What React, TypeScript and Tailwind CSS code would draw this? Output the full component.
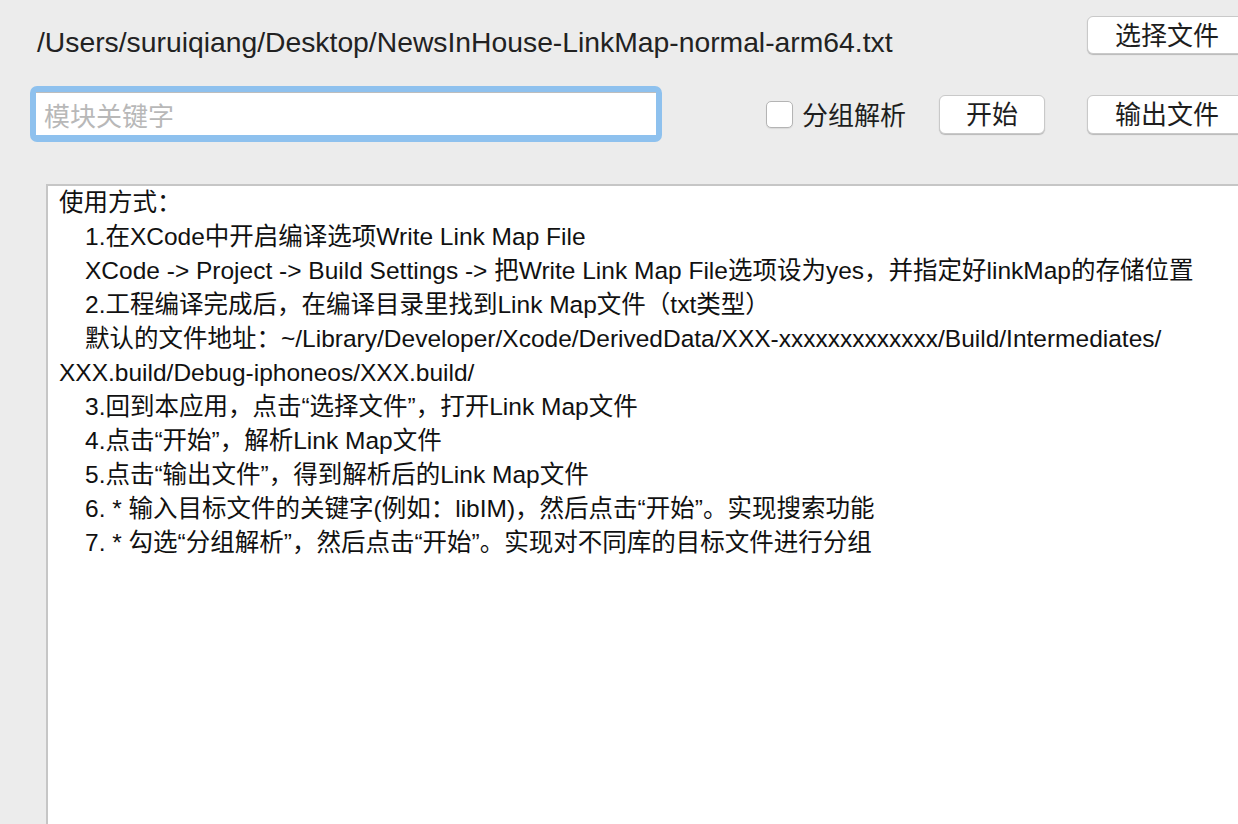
import React from "react";

const font = { fontFamily: '"Liberation Sans", "Noto Sans CJK SC", Arial, sans-serif' };

function MacButton({ label, className }: { label: string; className: string }) {
  return (
    <div
      className={
        "shrink-0 flex items-center justify-center rounded-[6px] bg-white border border-[#c9c9c9] shadow-[0_1px_1px_rgba(0,0,0,0.22)] text-[26px] leading-[30px] text-[#1e1e1e] pt-[2px] " +
        className
      }
    >
      {label}
    </div>
  );
}

const lines: { text: string; indent: boolean }[] = [
  { text: "使用方式：", indent: false },
  { text: "1.在XCode中开启编译选项Write Link Map File", indent: true },
  { text: "XCode -> Project -> Build Settings -> 把Write Link Map File选项设为yes，并指定好linkMap的存储位置", indent: true },
  { text: "2.工程编译完成后，在编译目录里找到Link Map文件（txt类型）", indent: true },
  { text: "默认的文件地址：~/Library/Developer/Xcode/DerivedData/XXX-xxxxxxxxxxxxx/Build/Intermediates/", indent: true },
  { text: "XXX.build/Debug-iphoneos/XXX.build/", indent: false },
  { text: "3.回到本应用，点击“选择文件”，打开Link Map文件", indent: true },
  { text: "4.点击“开始”，解析Link Map文件", indent: true },
  { text: "5.点击“输出文件”，得到解析后的Link Map文件", indent: true },
  { text: "6. * 输入目标文件的关键字(例如：libIM)，然后点击“开始”。实现搜索功能", indent: true },
  { text: "7. * 勾选“分组解析”，然后点击“开始”。实现对不同库的目标文件进行分组", indent: true },
];

export default function App() {
  return (
    <div className="w-[1238px] h-[824px] bg-[#ececec] overflow-hidden flex flex-col" style={font}>
      {/* Row 1 */}
      <div className="flex items-start shrink-0 h-[54px]">
        <div className="w-[1087px] shrink-0 pl-[37px] pt-[26px] text-[28.3px] leading-[32px] text-[#222]">
          /Users/suruiqiang/Desktop/NewsInHouse-LinkMap-normal-arm64.txt
        </div>
        <MacButton label="选择文件" className="mt-[16px] w-[160px] h-[38px]" />
      </div>

      {/* Row 2 */}
      <div className="flex items-center shrink-0 mt-[32px] h-[56px]">
        <div className="ml-[30px] w-[632px] h-[56px] shrink-0 rounded-[7px] bg-[#8ec1ee] pl-[6px] pr-[6px] pt-[6px] pb-[7px]">
          <div className="w-full h-full bg-white border-t border-[#bdbdbd] flex items-center pl-[8px] pt-[6px] text-[26px] text-[#b8b8b8]">
            模块关键字
          </div>
        </div>
        <div className="ml-[104px] w-[27px] h-[27px] shrink-0 rounded-[5px] bg-white border border-[#b4b4b4] shadow-[0_1px_1px_rgba(0,0,0,0.08)]" />
        <div className="ml-[9px] w-[137px] shrink-0 text-[26px] text-[#1e1e1e] leading-[30px] pt-[4px]">分组解析</div>
        <MacButton label="开始" className="w-[106px] h-[39px]" />
        <MacButton label="输出文件" className="ml-[42px] w-[160px] h-[39px]" />
      </div>

      {/* Text area */}
      <div className="mt-[42px] ml-[46px] flex-1 bg-white border-t-2 border-l-2 border-[#c6c6c6] pl-[11px] pt-0">
        {lines.map((l, i) => (
          <div
            key={i}
            className={"h-[34px] leading-[34px] text-[24.5px] text-[#111] whitespace-nowrap " + (l.indent ? "pl-[26px]" : "")}
          >
            {l.text}
          </div>
        ))}
      </div>
    </div>
  );
}
